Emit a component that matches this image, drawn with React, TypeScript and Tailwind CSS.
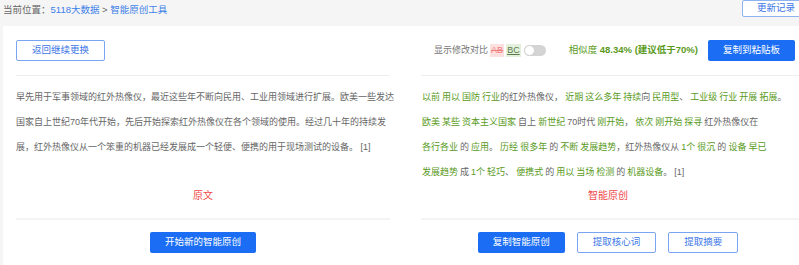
import React from 'react';

const font = "font-['Liberation_Sans','Noto_Sans_CJK_SC',sans-serif]";

const leftLines = [
  '早先用于军事领域的红外热像仪，最近这些年不断向民用、工业用领域进行扩展。欧美一些发达',
  '国家自上世纪70年代开始，先后开始探索红外热像仪在各个领域的使用。经过几十年的持续发',
  '展，红外热像仪从一个笨重的机器已经发展成一个轻便、便携的用于现场测试的设备。 [1]',
];

// [text, changed, glued to previous]
const rightLines: [string, boolean, boolean?][][] = [
  [['以前', true], ['用以', true], ['国防', true], ['行业', true], ['的红外热像仪，', false, true], ['近期', true], ['这么多年', true], ['持续', true], ['向', false, true], ['民用型', true], ['、', false, true], ['工业级', true], ['行业', true], ['开展', true], ['拓展', true], ['。', false, true]],
  [['欧美', true], ['某些', true], ['资本主义国家', true], ['自上', false], ['新世纪', true], ['70时代', false], ['刚开始', true], ['，', false, true], ['依次', true], ['刚开始', true], ['探寻', true], ['红外热像仪在', false]],
  [['各行各业', true], ['的', false], ['应用', true], ['。', false, true], ['历经', true], ['很多年', true], ['的', false], ['不断', true], ['发展趋势', true], ['，红外热像仪从', false, true], ['1个', true], ['很沉', true], ['的', false], ['设备', true], ['早已', true]],
  [['发展趋势', true], ['成', false], ['1个', true], ['轻巧', true], ['、', false, true], ['便携式', true], ['的', false], ['用以', true], ['当场', true], ['检测', true], ['的', false], ['机器设备', true], ['。 [1]', false, true]],
];

const solidBtn = 'h-[21px] px-[15px] bg-[#1b6ef3] text-white text-[9.5px] rounded-[2px] flex items-center shrink-0';
const lineBtn = 'h-[21px] px-[15px] bg-white border border-[#7aa5f2] text-[#3d76e6] text-[9.5px] rounded-[2px] flex items-center shrink-0';

export default function App() {
  return (
    <div className={`w-[799px] h-[265px] overflow-hidden bg-[#f5f5f5] ${font}`}>
      <div className="h-[26px] flex items-start">
        <div className="flex-1 pl-[3px] pt-[3px] text-[9.5px] leading-[13px] text-[#666]">
          当前位置：<span className="text-[#3d7fe8]">5118大数据</span> &gt; <span className="text-[#3d7fe8]">智能原创工具</span>
        </div>
        <button className="h-[17px] w-[71px] shrink-0 -mr-[14px] pl-[14px] bg-white border border-[#8fb2f0] text-[#3d76e6] text-[9.5px] rounded-[2px] flex items-center">更新记录</button>
      </div>

      <div className="ml-[3px] h-[239px] bg-white flex">
        {/* original */}
        <div className="ml-[13px] w-[374px] flex flex-col">
          <div className="pt-[14px] h-[49px]">
            <button className={lineBtn}>返回继续更换</button>
          </div>
          <div className="h-[1px] bg-[#eeeeee]" />
          <div className="mt-[9px] h-[100px] text-[9px] leading-[25px] text-[#666] whitespace-nowrap">
            {leftLines.map((l, i) => <div key={i}>{l}</div>)}
          </div>
          <div className="mt-[1px] h-[20px] leading-[20px] text-center text-[10px] text-[#f04a4a]">原文</div>
          <div className="mt-[12px] h-[2px] bg-[#f4f4f4]" />
          <div className="mt-[12px] flex justify-center">
            <button className={solidBtn}>开始新的智能原创</button>
          </div>
        </div>

        {/* rewritten */}
        <div className="ml-[31px] flex-1 flex flex-col">
          <div className="pt-[14px] h-[49px] pr-[4px] flex items-start justify-end">
            <div className="h-[21px] flex items-center text-[9px] text-[#777]">
              显示修改对比
              <span className="ml-[2px] px-[1px] bg-[#fde0e0] text-[#f07b7b] line-through">AB</span>
              <span className="ml-[2px] px-[1px] bg-[#e2f0dc] text-[#5c7a4a] underline">BC</span>
              <span className="ml-[3px] w-[22px] h-[11px] rounded-full bg-[#d4d4d4] relative">
                <span className="absolute left-0 top-0 w-[11px] h-[11px] rounded-full bg-white border border-[#cfcfcf]" />
              </span>
            </div>
            <div className="ml-[23px] h-[21px] flex items-center text-[9.5px] text-[#5a9a1c]">
              相似度&nbsp;<b>48.34% (建议低于70%)</b>
            </div>
            <button className={`ml-[10px] ${solidBtn}`}>复制到粘贴板</button>
          </div>
          <div className="h-[1px] bg-[#eeeeee]" />
          <div className="mt-[9px] h-[100px] pl-[1px] text-[9px] leading-[25px] text-[#666] whitespace-nowrap [word-spacing:-0.5px]">
            {rightLines.map((line, i) => (
              <div key={i}>
                {line.map(([t, changed, glued], j) => (
                  <span key={j} className={changed ? 'text-[#5a9a1c]' : ''}>{j > 0 && !glued ? ' ' : ''}{t}</span>
                ))}
              </div>
            ))}
          </div>
          <div className="mt-[1px] h-[20px] pr-[4px] leading-[20px] text-center text-[10px] text-[#f04a4a]">智能原创</div>
          <div className="mt-[12px] h-[2px] bg-[#f4f4f4]" />
          <div className="mt-[12px] pr-[4px] flex justify-center gap-[12px]">
            <button className={solidBtn}>复制智能原创</button>
            <button className={lineBtn}>提取核心词</button>
            <button className={lineBtn}>提取摘要</button>
          </div>
        </div>
      </div>
    </div>
  );
}
